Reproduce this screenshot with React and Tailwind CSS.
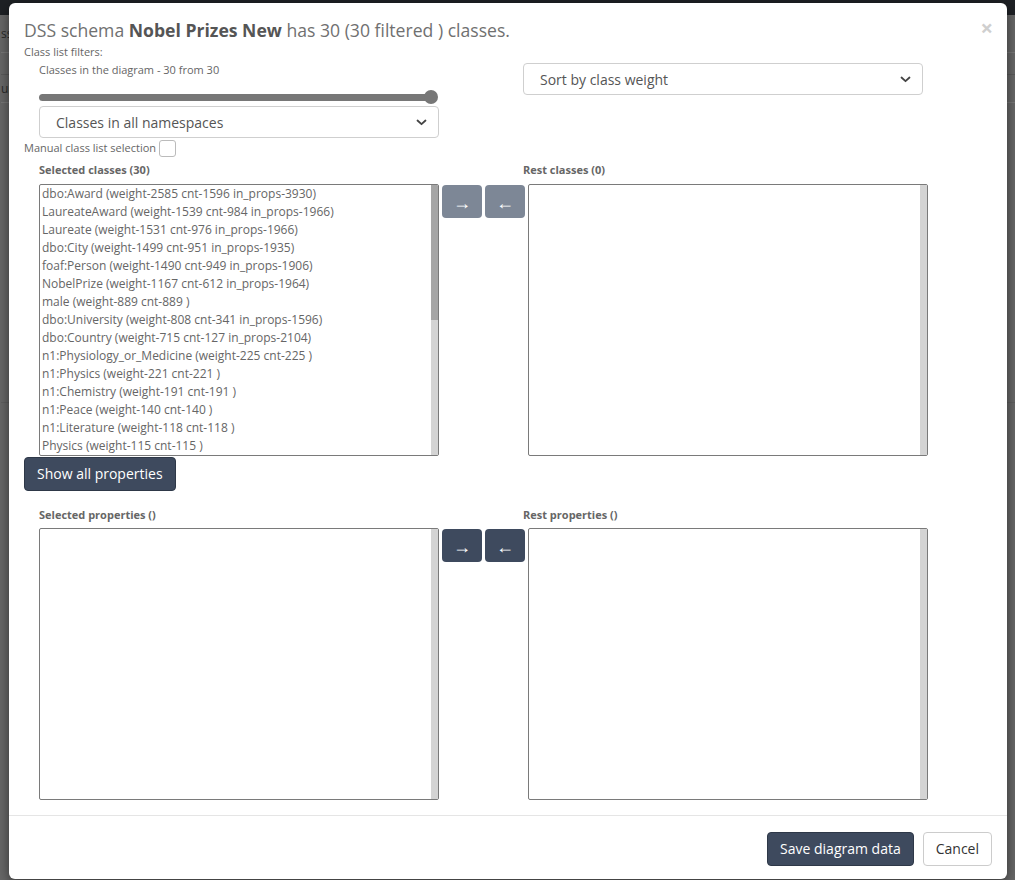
import React from 'react';

const classes = [
  'dbo:Award (weight-2585 cnt-1596 in_props-3930)',
  'LaureateAward (weight-1539 cnt-984 in_props-1966)',
  'Laureate (weight-1531 cnt-976 in_props-1966)',
  'dbo:City (weight-1499 cnt-951 in_props-1935)',
  'foaf:Person (weight-1490 cnt-949 in_props-1906)',
  'NobelPrize (weight-1167 cnt-612 in_props-1964)',
  'male (weight-889 cnt-889 )',
  'dbo:University (weight-808 cnt-341 in_props-1596)',
  'dbo:Country (weight-715 cnt-127 in_props-2104)',
  'n1:Physiology_or_Medicine (weight-225 cnt-225 )',
  'n1:Physics (weight-221 cnt-221 )',
  'n1:Chemistry (weight-191 cnt-191 )',
  'n1:Peace (weight-140 cnt-140 )',
  'n1:Literature (weight-118 cnt-118 )',
  'Physics (weight-115 cnt-115 )',
];

function Chevron() {
  return (
    <svg width="11" height="7" viewBox="0 0 11 7" fill="none">
      <path d="M1.5 1.5 L5.5 5.2 L9.5 1.5" stroke="#444" strokeWidth="1.8" strokeLinecap="round" strokeLinejoin="round" />
    </svg>
  );
}

function SelectBox({ label }) {
  return (
    <div className="h-[32px] w-[400px] border border-[#cfcfcf] rounded-[4px] bg-white flex items-center justify-between pl-[16px] pr-[11px]">
      <span className="text-[14px] text-[#555]">{label}</span>
      <Chevron />
    </div>
  );
}

// List box with a drawn scrollbar at the right edge
function ListBox({ items = [], thumb = false }) {
  return (
    <div className="w-[400px] h-[272px] border border-[#7a7a7a] rounded-[2px] bg-white flex overflow-hidden shrink-0">
      <div className="flex-1 overflow-hidden pl-[2px]">
        {items.map((item) => (
          <div key={item} className="text-[12px] leading-[18px] text-[#666] whitespace-nowrap">
            {item}
          </div>
        ))}
      </div>
      <div className="w-[7px] bg-[#d4d4d4] flex flex-col">
        {thumb && <div className="h-[135px] bg-[#a6a6a6]" />}
      </div>
    </div>
  );
}

function ArrowButtons({ dark }) {
  const cls = dark ? 'bg-[#3e4a5e]' : 'bg-[#7d8796]';
  return (
    <div className="flex gap-[3px] mx-[3px] mt-[1px] items-start shrink-0">
      <button className={`${cls} w-[40px] h-[33px] rounded-[4px] text-white text-[18px] leading-[18px]`}>→</button>
      <button className={`${cls} w-[40px] h-[33px] rounded-[4px] text-white text-[18px] leading-[18px]`}>←</button>
    </div>
  );
}

export default function App() {
  return (
    <div className="relative w-[1015px] h-[880px] overflow-hidden bg-[#676767] font-['Open_Sans',sans-serif]">
      {/* Page behind the modal */}
      <div className="h-[15px] bg-[#1e2125]" />
      <div className="text-[12px] text-[#2a2a2a] pl-[1px]">
        <div className="h-[38px] border-b border-[#777] flex items-center">ss</div>
        <div className="h-[22px] border-b border-[#5a5a5a]" />
        <div className="h-[28px] border-b border-[#777] flex items-center">up</div>
        <div className="h-[300px] border-b border-[#5e5e5e]" />
      </div>

      {/* Modal */}
      <div className="absolute left-[9px] top-[3px] w-[998px] h-[876px] bg-white rounded-[6px] shadow-[0_3px_12px_rgba(0,0,0,0.5)] flex flex-col">
        <div className="flex-1 px-[15px] pt-[16px] relative">
          <h4 className="text-[17.6px] leading-[22px] text-[#707070]">
            DSS schema <span className="font-bold text-[#555]">Nobel Prizes New</span> has 30 (30 filtered ) classes.
          </h4>
          <button className="absolute right-[14px] top-[13px] text-[22px] leading-[22px] font-bold text-[#cfcfcf]">×</button>

          <div className="mt-[4px] text-[11px] leading-[14px] text-[#666]">Class list filters:</div>

          <div className="flex">
            <div className="w-[484px] pl-[15px]">
              <div className="mt-[4px] text-[11px] leading-[14px] text-[#666]">Classes in the diagram - 30 from 30</div>
              <div className="mt-[13px] h-[14px] w-[400px] flex items-center">
                <div className="flex-1 h-[7px] bg-[#777] rounded-l-full" />
                <div className="w-[14px] h-[14px] rounded-full bg-[#777] -ml-[7px] mr-[1px]" />
              </div>
              <div className="mt-[2px]">
                <SelectBox label="Classes in all namespaces" />
              </div>
            </div>
            <div className="pl-[15px] mt-[4px]">
              <SelectBox label="Sort by class weight" />
            </div>
          </div>

          <div className="mt-[2px] h-[17px] flex items-center gap-[3px]">
            <span className="text-[11px] text-[#666]">Manual class list selection</span>
            <span className="w-[17px] h-[17px] border border-[#bbb] rounded-[3px] bg-white" />
          </div>

          <div className="flex mt-[6px] text-[11px] leading-[14px] font-bold text-[#666]">
            <div className="w-[484px] pl-[15px]">Selected classes (30)</div>
            <div className="pl-[15px]">Rest classes (0)</div>
          </div>
          <div className="flex mt-[7px] pl-[15px]">
            <ListBox items={classes} thumb />
            <ArrowButtons />
            <ListBox />
          </div>

          <button className="mt-[1px] h-[34px] px-[12px] bg-[#3e4a5e] text-white text-[14px] leading-[20px] rounded-[4px] border border-[#2e3848]">
            Show all properties
          </button>

          <div className="flex mt-[17px] text-[11px] leading-[14px] font-bold text-[#666]">
            <div className="w-[484px] pl-[15px]">Selected properties ()</div>
            <div className="pl-[15px]">Rest properties ()</div>
          </div>
          <div className="flex mt-[6px] pl-[15px]">
            <ListBox />
            <ArrowButtons dark />
            <ListBox />
          </div>
        </div>

        <div className="h-[64px] border-t border-[#e5e5e5] flex justify-end items-start gap-[9px] pt-[16px] pr-[15px]">
          <button className="h-[34px] px-[12px] bg-[#3e4a5e] text-white text-[14px] leading-[20px] rounded-[4px] border border-[#2e3848]">
            Save diagram data
          </button>
          <button className="h-[34px] px-[12px] bg-white text-[#333] text-[14px] leading-[20px] rounded-[4px] border border-[#ccc]">
            Cancel
          </button>
        </div>
      </div>
    </div>
  );
}
